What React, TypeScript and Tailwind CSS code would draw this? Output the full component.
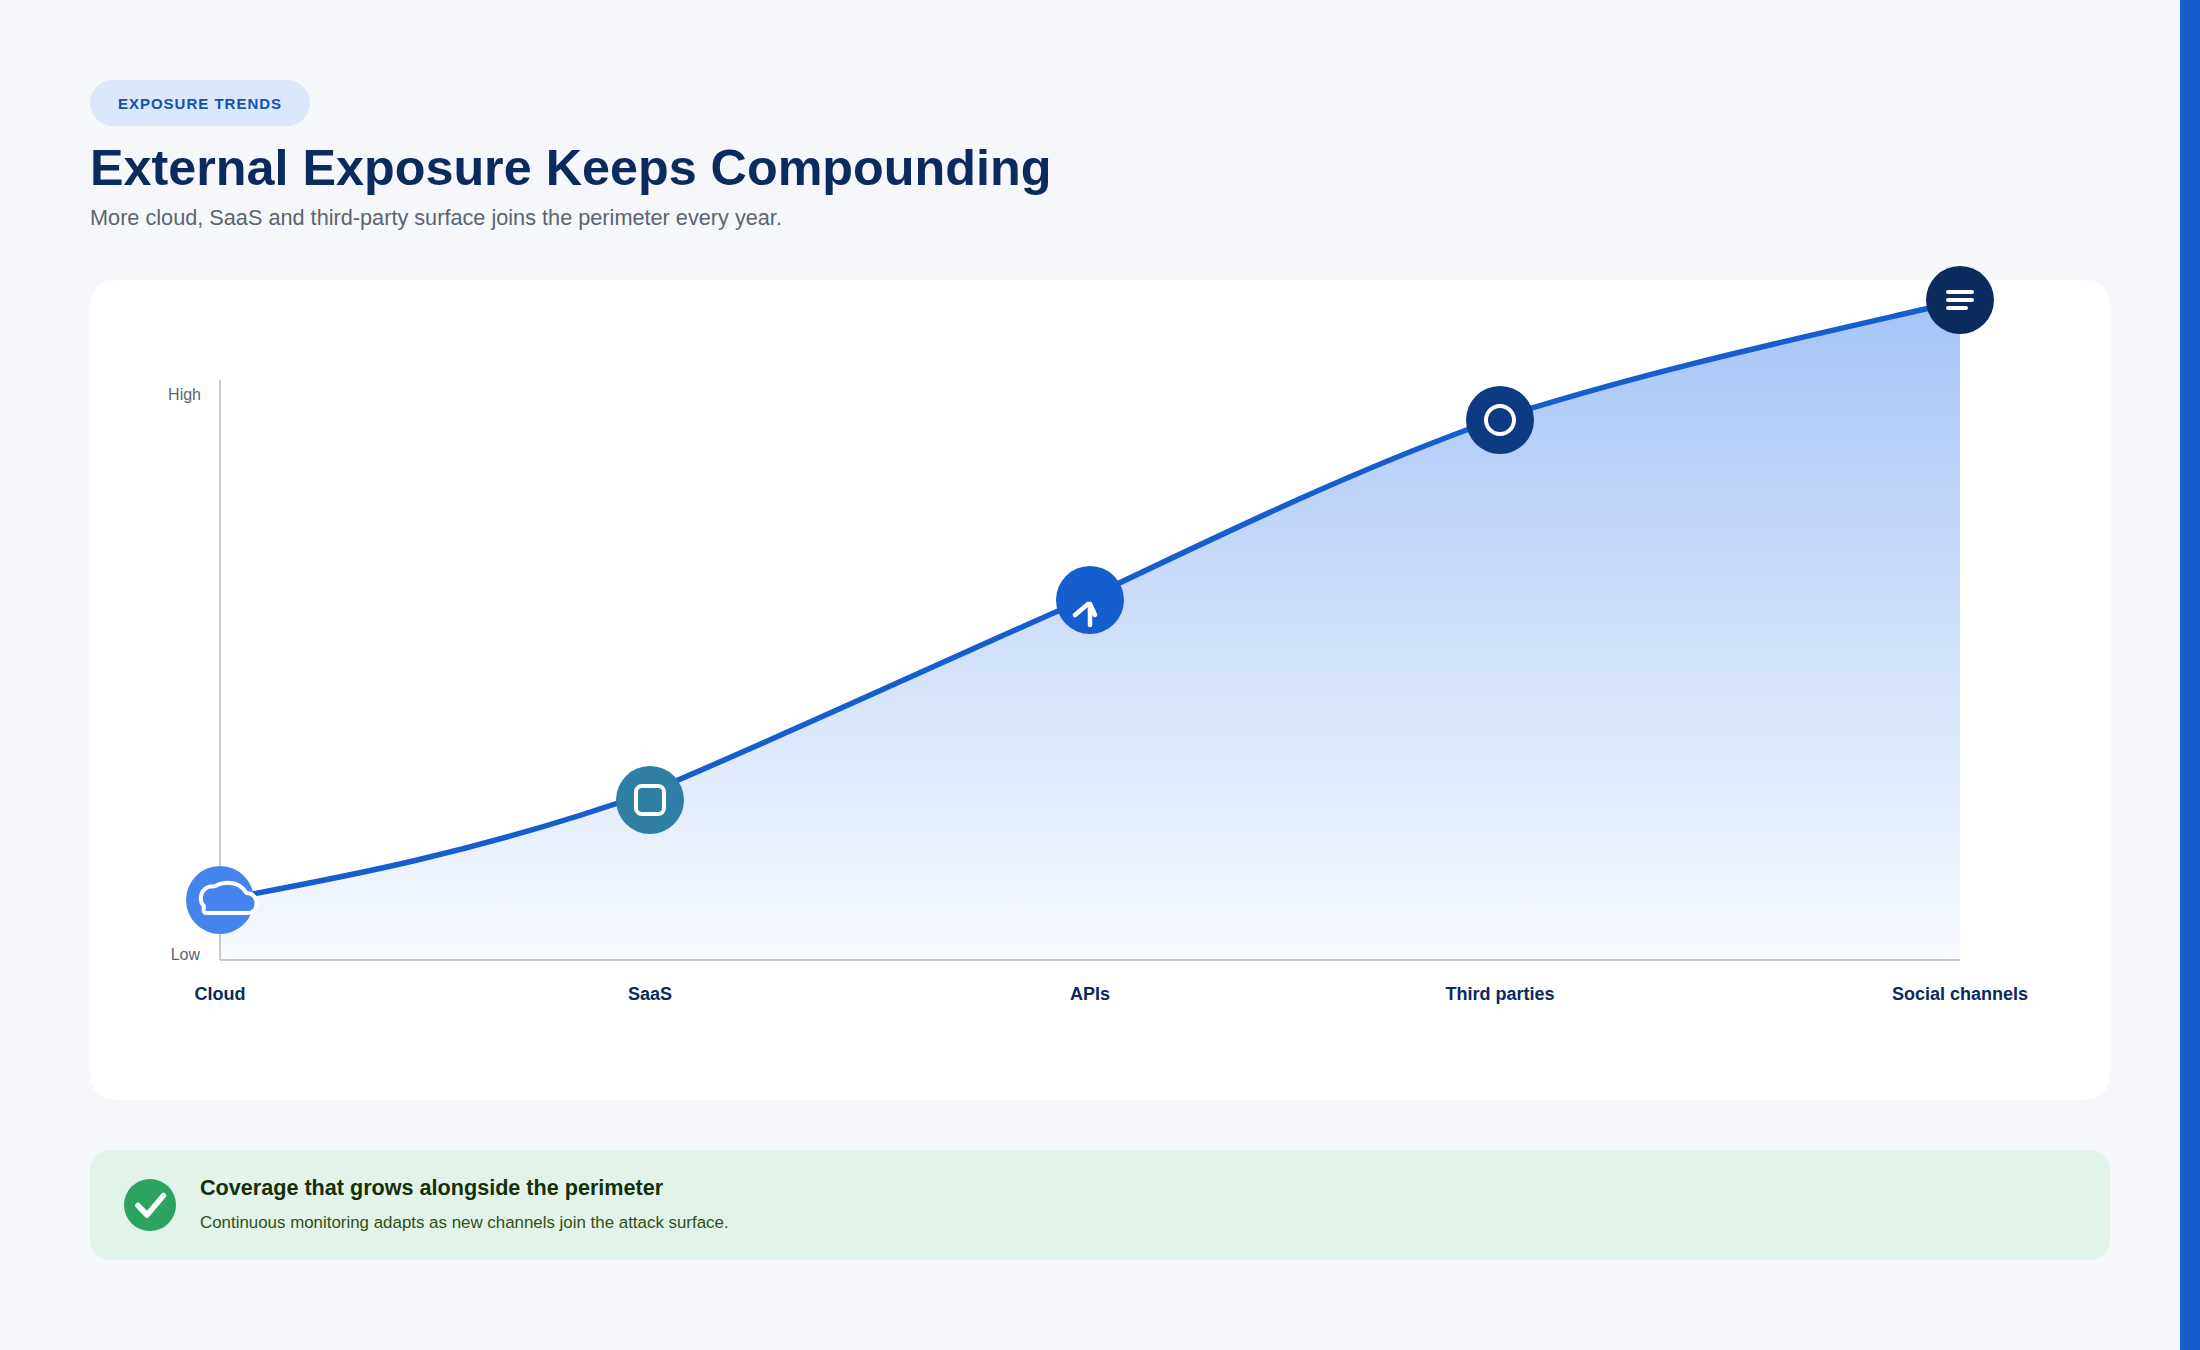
const curve = "M220 900 C340 878 480 852 650 792 C790 733 950 658 1090 597 C1230 530 1370 463 1500 418 C1650 370 1800 338 1960 301";
const labels = [
  { x: 220, t: "Cloud" },
  { x: 650, t: "SaaS" },
  { x: 1090, t: "APIs" },
  { x: 1500, t: "Third parties" },
  { x: 1960, t: "Social channels" },
];

export default function App() {
  return (
    <div className="flex min-h-[1350px] bg-[#f5f7fb] font-['Liberation_Sans',Arial,sans-serif]">
      <main className="flex-1 pl-[90px] pr-[70px] pt-[80px]">
        <div className="flex h-[46px] w-[220px] items-center justify-center rounded-full bg-[#dbe7fb] pt-[2px] text-[15px] font-bold tracking-[1px] text-[#1450b0]">
          EXPOSURE TRENDS
        </div>
        <h1 className="mt-[12px] text-[50.3px] font-bold leading-[60px] text-[#0b2a5e]">External Exposure Keeps Compounding</h1>
        <p className="mt-[5px] text-[21.7px] leading-[30px] text-[#5b6470]">More cloud, SaaS and third-party surface joins the perimeter every year.</p>

        <section className="mt-[47px] h-[820px] rounded-[24px] bg-white">
          <svg width="2020" height="820" viewBox="90 280 2020 820" className="block overflow-visible">
            <defs>
              <linearGradient id="area" x1="0" y1="300" x2="0" y2="960" gradientUnits="userSpaceOnUse">
                <stop offset="0" stopColor="#4485ed" stopOpacity="0.48" />
                <stop offset="1" stopColor="#4485ed" stopOpacity="0.04" />
              </linearGradient>
            </defs>
            <line x1="220" y1="380" x2="220" y2="960" stroke="#cdccc0" strokeWidth="2" />
            <line x1="220" y1="960" x2="1960" y2="960" stroke="#cdccc0" strokeWidth="2" />
            <path d={curve + " L1960 960 L220 960 Z"} fill="url(#area)" />
            <path d={curve} fill="none" stroke="#165dcd" strokeWidth="5.5" />

            <text x="201" y="400" textAnchor="end" fontSize="16" fill="#5b6470">High</text>
            <text x="200" y="960" textAnchor="end" fontSize="16" fill="#5b6470">Low</text>
            {labels.map((l) => (
              <text key={l.t} x={l.x} y="1000" textAnchor="middle" fontSize="18" fontWeight="700" fill="#0b2a5e">{l.t}</text>
            ))}

            <circle cx="220" cy="900" r="34" fill="#4485ed" />
            <path
              d="M206 913 C203 913 203.5 909 204 906 C199 902 199.5 891 208 887 C210 886 213 887 215.5 886 C220 883 224 882.7 228.5 882.7 C236 882.7 243 887 246.5 893 C252 893 256.5 897 256.5 903 C256.5 909 253 913 248 913 Z"
              fill="#4485ed"
              stroke="#ffffff"
              strokeWidth="4"
              strokeLinejoin="round"
            />

            <circle cx="650" cy="800" r="34" fill="#2f7fa5" />
            <rect x="636" y="786" width="28" height="28" rx="6" fill="none" stroke="#ffffff" strokeWidth="4" />

            <circle cx="1090" cy="600" r="34" fill="#165dcd" />
            <path d="M1075 615 L1088 604 M1090 604 L1090 625 M1090 604 L1095 615" fill="none" stroke="#ffffff" strokeWidth="4.5" strokeLinecap="round" />

            <circle cx="1500" cy="420" r="34" fill="#0e3a82" />
            <circle cx="1500" cy="420" r="14" fill="none" stroke="#ffffff" strokeWidth="4" />

            <circle cx="1960" cy="300" r="34" fill="#0b2a5e" />
            <path d="M1948 292 H1972 M1948 300 H1972 M1948 308 H1966" fill="none" stroke="#ffffff" strokeWidth="4" strokeLinecap="round" />
          </svg>
        </section>

        <section className="mt-[50px] flex h-[110px] items-center gap-[24px] rounded-[20px] bg-[#e2f3e9] px-[34px]">
          <svg width="52" height="52" viewBox="0 0 52 52" className="shrink-0">
            <circle cx="26" cy="26" r="26" fill="#2ca35f" />
            <path d="M14 26.5 L23 36 L39.5 16.5" fill="none" stroke="#ffffff" strokeWidth="5.5" strokeLinecap="round" strokeLinejoin="round" />
          </svg>
          <div className="-mt-[2px]">
            <div className="text-[21.6px] font-bold leading-[28px] text-[#14300a]">Coverage that grows alongside the perimeter</div>
            <div className="mt-[9px] text-[16.9px] leading-[24px] text-[#2f5010]">Continuous monitoring adapts as new channels join the attack surface.</div>
          </div>
        </section>
      </main>
      <div className="w-[20px] shrink-0 bg-[#165dcd]" />
    </div>
  );
}
